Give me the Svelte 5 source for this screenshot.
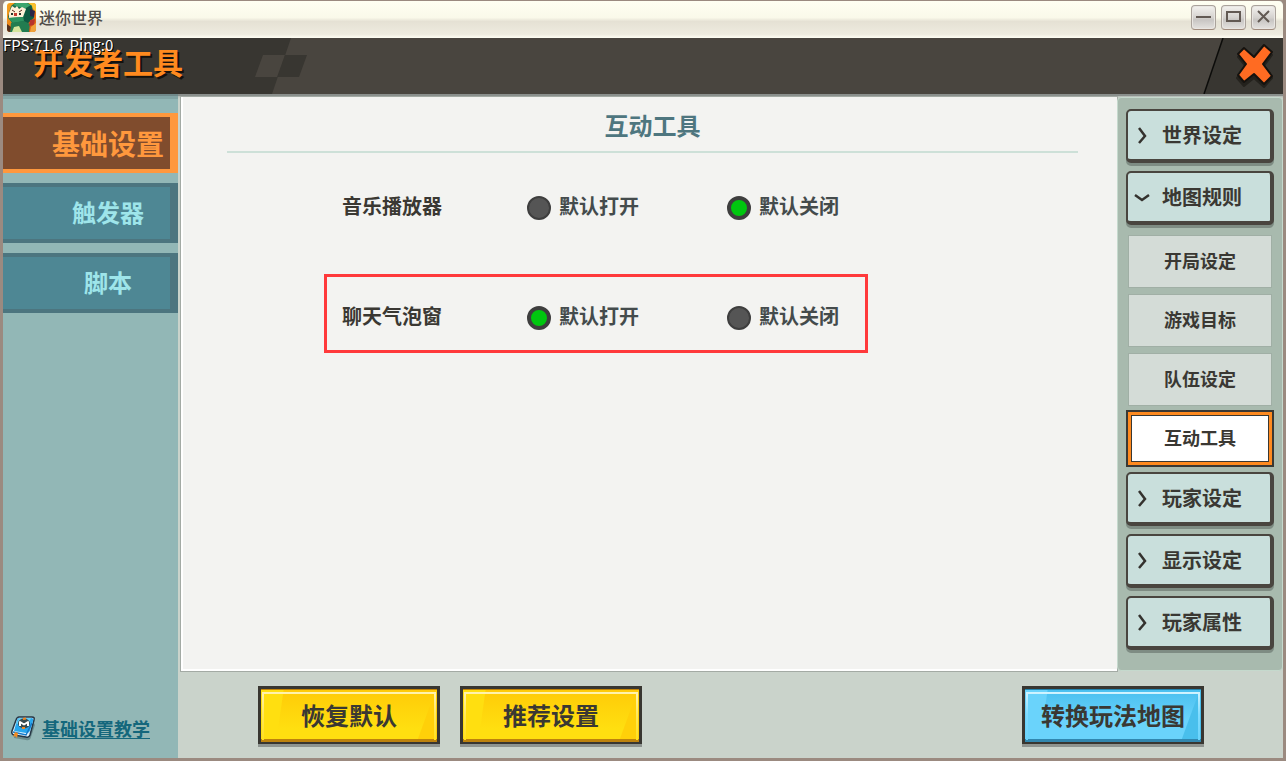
<script>
  const tabs = ['基础设置', '触发器', '脚本'];
  const groups = [
    { name: '世界设定' },
    { name: '地图规则', items: ['开局设定', '游戏目标', '队伍设定', '互动工具'] },
    { name: '玩家设定' },
    { name: '显示设定' },
    { name: '玩家属性' }
  ];
  const choices = ['默认打开', '默认关闭'];
  let activeTab = $state('基础设置');
  let activeItem = $state('互动工具');
  let openGroup = $state('地图规则');
  let rows = $state([
    { id: 'music', label: '音乐播放器', value: '默认关闭', marked: false },
    { id: 'bubble', label: '聊天气泡窗', value: '默认打开', marked: true }
  ]);
</script>

<div class="window">
  <div class="titlebar">
    <svg class="app-icon" viewBox="0 0 29 29" aria-hidden="true">
      <defs>
        <linearGradient id="sun" x1="0" y1="0" x2="1" y2="1">
          <stop offset="0" stop-color="#f5a31c" />
          <stop offset="1" stop-color="#dd5a12" />
        </linearGradient>
        <clipPath id="round"><rect width="29" height="29" rx="3" /></clipPath>
      </defs>
      <g clip-path="url(#round)">
        <rect width="29" height="29" fill="url(#sun)" />
        <path d="M21 0H29V9Z" fill="#f8c22d" />
        <path d="M1 14L4 3L8 0H21L25 3L27 15L21 20L5 20Z" fill="#176c4b" />
        <path d="M6 2L9 0H20L25 3L19 6Z" fill="#3ba66e" />
        <path d="M19 5L24 2L27 14L21 20L16 19Z" fill="#0f5a42" />
        <path d="M5 3L8 5L10 3L12 6L15 4L19 6L16 14L2 15L2 10Z" fill="#fff0d8" />
        <path d="M5 7L8 9M12 9L15 7" stroke="#5a2b22" stroke-width="1" />
        <path d="M4 10H6V12H4ZM12 10H14V12H12Z" fill="#28352d" />
        <path d="M7 10H10V13H7Z" fill="#c63a2f" />
        <path d="M1 15L16 14L17 18L6 20Z" fill="#2d9461" />
        <path d="M23 6L28 8L27 14L23 13Z" fill="#292547" />
        <path d="M4 20L17 18L23 21L22 29H3Z" fill="#227c50" />
        <path d="M7 24L12 23L15 29H5Z" fill="#d6e59b" />
        <path d="M23 17L28 16L27 22L22 23Z" fill="#b7352b" />
        <path d="M24 24L29 20V29H23Z" fill="#f0a33a" />
        <path d="M0 21L4 24L3 29H0Z" fill="#56301d" />
      </g>
    </svg>
    <span class="app-name">迷你世界</span>
    <div class="window-buttons">
      <button aria-label="最小化"><svg viewBox="0 0 23 23"><path d="M4 11H19" /></svg></button>
      <button aria-label="最大化"><svg viewBox="0 0 23 23"><rect x="5" y="6" width="13" height="9" /></svg></button>
      <button aria-label="关闭窗口"><svg viewBox="0 0 23 23"><path d="M6 5L17 16M17 5L6 16" /></svg></button>
    </div>
  </div>

  <header>
    <div class="stats">FPS:71.6&nbsp; Ping:0</div>
    <h1>开发者工具</h1>
    <svg class="slant" viewBox="0 0 60 56" aria-hidden="true">
      <path d="M0 0H41L22 56H0Z" fill="#383631" />
      <path d="M13 17H35L28 39H5Z" fill="#49453f" />
      <path d="M35 17H57L49 39H27Z" fill="#383631" />
    </svg>
    <button class="close" aria-label="关闭">
      <svg viewBox="0 0 80 56" aria-hidden="true">
        <path d="M20 0H80V56H1Z" fill="#383631" />
        <path d="M20 0L1 56" stroke="#0c0c0a" stroke-width="1.500" />
        <path d="M35 19L41 12L51 21L61 10L69 17L60 29L69 40L61 49L51 40L41 48L34 40L43 29Z" fill="#24221d" stroke="#24221d" stroke-width="2" stroke-linejoin="round" />
        <path d="M35 16L41 10L51 19L61 7L69 14L60 26L69 38L61 46L51 36L41 44L35 37L43 26Z" fill="#ff6b22" stroke="#15120e" stroke-width="2" stroke-linejoin="round" />
      </svg>
    </button>
  </header>

  <div class="body">
    <aside>
      <nav class="tabs">
        {#each tabs as tab, i}
          <button class:active={activeTab === tab} class:large={i === 0} onclick={() => (activeTab = tab)}>{tab}</button>
        {/each}
      </nav>
      <a class="guide" href="#guide">
        <svg viewBox="0 0 26 26" aria-hidden="true">
          <path d="M7 5L23 6L25 10L21 22Q20 26 16 25L4 23Z" fill="#6c8c8c" />
          <path d="M9 2H22Q25 2 24 5L20 20Q19 23 16 22L4 20Q1 19 2 16L6 5Q7 2 9 2Z" fill="#e2f4ff" stroke="#263746" stroke-width="1.500" />
          <path d="M9 3H21Q24 3 23 6L20 16Q19 18 16 18L4 16L7 5Q8 3 9 3Z" fill="#28a7ed" />
          <path d="M9 3H21L19 8L6 9Z" fill="#63cef7" />
          <path d="M3 17L16 20L22 8" fill="none" stroke="#1679c7" stroke-width="1.500" />
          <ellipse cx="14" cy="8.500" rx="6" ry="5" fill="#394b50" />
          <path d="M13 4L16 3.500M12 13L15 13" stroke="#f28b24" stroke-width="2" />
          <path d="M10 11V7L14 9.500L18 7V11" fill="none" stroke="#fff" stroke-width="2" stroke-linejoin="round" />
          <path d="M5 17L8 18L7 23L5 21L3 22Z" fill="#f38b20" />
        </svg>
        <span>基础设置教学</span>
      </a>
    </aside>

    <div class="workspace">
      <div class="panels">
        <main>
          <h2>互动工具</h2>
          <div class="settings">
            {#each rows as row}
              <div class="row" class:marked={row.marked} role="radiogroup" aria-labelledby={row.id}>
                <span class="label" id={row.id}>{row.label}</span>
                {#each choices as choice}
                  <label><input type="radio" name={row.id} value={choice} bind:group={row.value} />{choice}</label>
                {/each}
              </div>
            {/each}
          </div>
        </main>

        <nav class="rules">
          {#each groups as group}
            <button class="group" onclick={() => (openGroup = group.name)}>
              <svg viewBox="0 0 18 18" aria-hidden="true">
                {#if group.items && openGroup === group.name}
                  <path d="M2 8L9 13L16 8" />
                {:else}
                  <path d="M6 3L12 11L6 18" />
                {/if}
              </svg>
              <span>{group.name}</span>
            </button>
            {#if group.items && openGroup === group.name}
              <div class="items">
                {#each group.items as item}
                  <button class:active={activeItem === item} onclick={() => (activeItem = item)}>{item}</button>
                {/each}
              </div>
            {/if}
          {/each}
        </nav>
      </div>

      <footer>
        {#each ['恢复默认', '推荐设置', '转换玩法地图'] as action, i}
          <button class:blue={i === 2}><span>{action}</span></button>
        {/each}
      </footer>
    </div>
  </div>
</div>

<style>
  :global(body) { margin: 0; background: #9b8a80; }
  * { box-sizing: border-box; }
  button { font: inherit; color: inherit; padding: 0; border: 0; background: none; cursor: pointer; }
  svg { display: block; }

  .window {
    min-height: 100vh;
    display: flex;
    flex-direction: column;
    border: solid #9b8a80;
    border-width: 1px 3px 3px;
    border-top-left-radius: 6px;
    border-top-right-radius: 6px;
    font-family: "Noto Sans CJK SC", sans-serif;
    font-weight: 700;
    color: #3a3833;
    background: #cad3cb;
  }

  .titlebar {
    height: 37px;
    display: flex;
    align-items: center;
    gap: 3px;
    padding: 0 7px 5px 4px;
    border-radius: 5px 5px 0 0;
    background: linear-gradient(#fffff2 0, #faf9ea 45%, #e5e1d4 55%, #eeebdf 90%, #fffef4 100%);
  }
  .app-icon { width: 29px; height: 29px; }
  .app-name { font-size: 16px; line-height: 24px; font-weight: 500; color: #504b48; }
  .window-buttons { display: flex; gap: 5px; margin-left: auto; }
  .window-buttons button {
    width: 25px;
    height: 25px;
    border: 1px solid #aaa29b;
    border-bottom-color: #a08a7c;
    border-radius: 4px;
    background: linear-gradient(#f4f2ef, #d5d2cf 50%, #c8c5c3 60%, #e4e2df);
    box-shadow: inset 0 0 0 1px #e9e6e2;
  }
  .window-buttons svg { width: 23px; fill: none; stroke: #625953; stroke-width: 2; }

  header { position: relative; height: 56px; display: flex; background: #49453f; }
  h1 {
    width: 247px;
    margin: 0;
    padding-left: 30px;
    background: #383631;
    color: #ff8a1f;
    font-size: 30px;
    line-height: 46px;
    text-shadow: 2px 2px 0 #14110d;
  }
  .slant { width: 60px; height: 56px; }
  .close { margin-left: auto; }
  .close svg { width: 80px; height: 56px; }
  .stats {
    position: absolute;
    left: 0;
    top: -4px;
    color: #fff;
    font: 400 15px/22px "Noto Sans CJK SC", sans-serif;
    text-shadow: 1px 1px 0 #000;
  }

  .body { flex: 1; display: flex; }
  aside {
    width: 175px;
    display: flex;
    flex-direction: column;
    justify-content: space-between;
    padding: 19px 0 17px;
    background: linear-gradient(#70898a 0, #70898a 2px, #82a4a4 2px, #82a4a4 5px, #92b7b6 5px);
  }
  .tabs { display: flex; flex-direction: column; gap: 10px; }
  .tabs button {
    height: 60px;
    padding: 0 0 3px 43px;
    border: solid #4c757f;
    border-width: 4px 8px 4px 0;
    background: #4e8794;
    color: #9ee5ea;
    font-size: 24px;
  }
  .tabs .large { padding-bottom: 0; font-size: 28px; }
  .tabs .active { border-color: #ff983d; background: #804c2d; color: #ff983d; }
  .guide {
    display: flex;
    align-items: center;
    gap: 6px;
    padding-left: 7px;
    color: #14677c;
    font-size: 18px;
    line-height: 24px;
    text-decoration: none;
  }
  .guide svg { width: 26px; height: 26px; }
  .guide span { border-bottom: 1px solid #14677c; line-height: 20px; }

  .workspace {
    flex: 1;
    display: flex;
    flex-direction: column;
    background: linear-gradient(#8a8f8c 0, #8a8f8c 2px, #b1b8b2 2px, #cad3cb 4px);
  }
  .panels { flex: 1; display: flex; padding: 3px 0 0 2px; }
  main {
    flex: 1;
    padding: 10px 39px 0 44px;
    border: solid #fff;
    border-width: 0 0 2px 2px;
    outline: 1px solid #a3aaa4;
    margin-left: 1px;
    background: #f3f3f1;
  }
  h2 {
    margin: 0 0 11px;
    border-bottom: 2px solid #cde0d8;
    color: #4e767f;
    font-size: 24px;
    line-height: 36px;
    padding-bottom: 8px;
    text-align: center;
  }
  .settings { display: flex; flex-direction: column; gap: 31px; padding-left: 97px; }
  .row {
    width: 544px;
    height: 79px;
    display: grid;
    grid-template-columns: 185px 200px auto;
    align-items: center;
    padding: 4px 0 0 15px;
    border: 3px solid transparent;
    font-size: 20px;
    line-height: 28px;
  }
  .marked { border-color: #ff393b; }
  .row label { display: flex; align-items: center; gap: 8px; color: #444b4c; }
  input {
    appearance: none;
    width: 24px;
    height: 24px;
    margin: 4px 0 0;
    border: 2px solid #3e3e3e;
    border-radius: 50%;
    background: #555;
  }
  input:checked { border-width: 4px; background: #00c70f; }

  .rules {
    position: relative;
    width: 166px;
    display: flex;
    flex-direction: column;
    gap: 8px;
    padding: 11px 8px 19px;
    border: 1px solid #c5d9cd;
    border-radius: 4px;
    background: #a8baae;
  }
  .group {
    height: 54px;
    display: flex;
    align-items: center;
    gap: 11px;
    padding: 0 0 2px 5px;
    border: solid #49453f;
    border-width: 2px 4px 4px 2px;
    border-radius: 5px;
    background: #c9dfdc;
    box-shadow: 0 3px 0 #7e8c83;
    font-size: 20px;
  }
  .group svg { width: 18px; height: 18px; overflow: visible; fill: none; stroke: #34322e; stroke-width: 2.5; }
  .items { display: flex; flex-direction: column; gap: 6px; padding: 2px 2px 0; margin-bottom: -1px; }
  .items button { height: 53px; padding-bottom: 3px; border: 1px solid #a0afa5; background: #d4dcd7; font-size: 18px; }
  .items .active {
    border: 3px solid #ff8a1f;
    background: #fff;
    box-shadow: 0 0 0 2px #3a3833, inset 0 0 0 1px #3a3833;
  }

  footer { display: flex; gap: 20px; padding: 15px 79px 14px 80px; }
  footer button {
    width: 182px;
    height: 58px;
    padding: 1px;
    border: solid #383631;
    border-width: 3px 3px 2px;
    box-shadow: 0 3px 0 #8e9490, inset 0 1px 0 #c48307, inset 0 -3px 0 #bd820d;
    background:
      linear-gradient(98deg, #ffdf10 0 22px, transparent 23px),
      linear-gradient(110deg, transparent 0 164px, #ffd009 165px),
      linear-gradient(#ffca07, #ffdf10 75%);
    font-size: 24px;
  }
  footer span {
    display: block;
    height: 48px;
    line-height: 42px;
    border: 2px solid;
    border-image: linear-gradient(#fff3b0, #ffe95a 45%, #ffe01a) 2;
    border-bottom-width: 0;
  }
  footer .blue {
    margin-left: auto;
    box-shadow: 0 3px 0 #8e9490, inset 0 1px 0 #2586b0, inset 0 -3px 0 #3187af;
    background:
      linear-gradient(98deg, #6ad3fb 0 22px, transparent 23px),
      linear-gradient(110deg, transparent 0 164px, #49bfec 165px),
      linear-gradient(#48bfef, #6ad3fb 60%);
  }
  .blue span { border-image-source: linear-gradient(#d2f4ff, #80dcff 45%, #6ad3fb); }
</style>
